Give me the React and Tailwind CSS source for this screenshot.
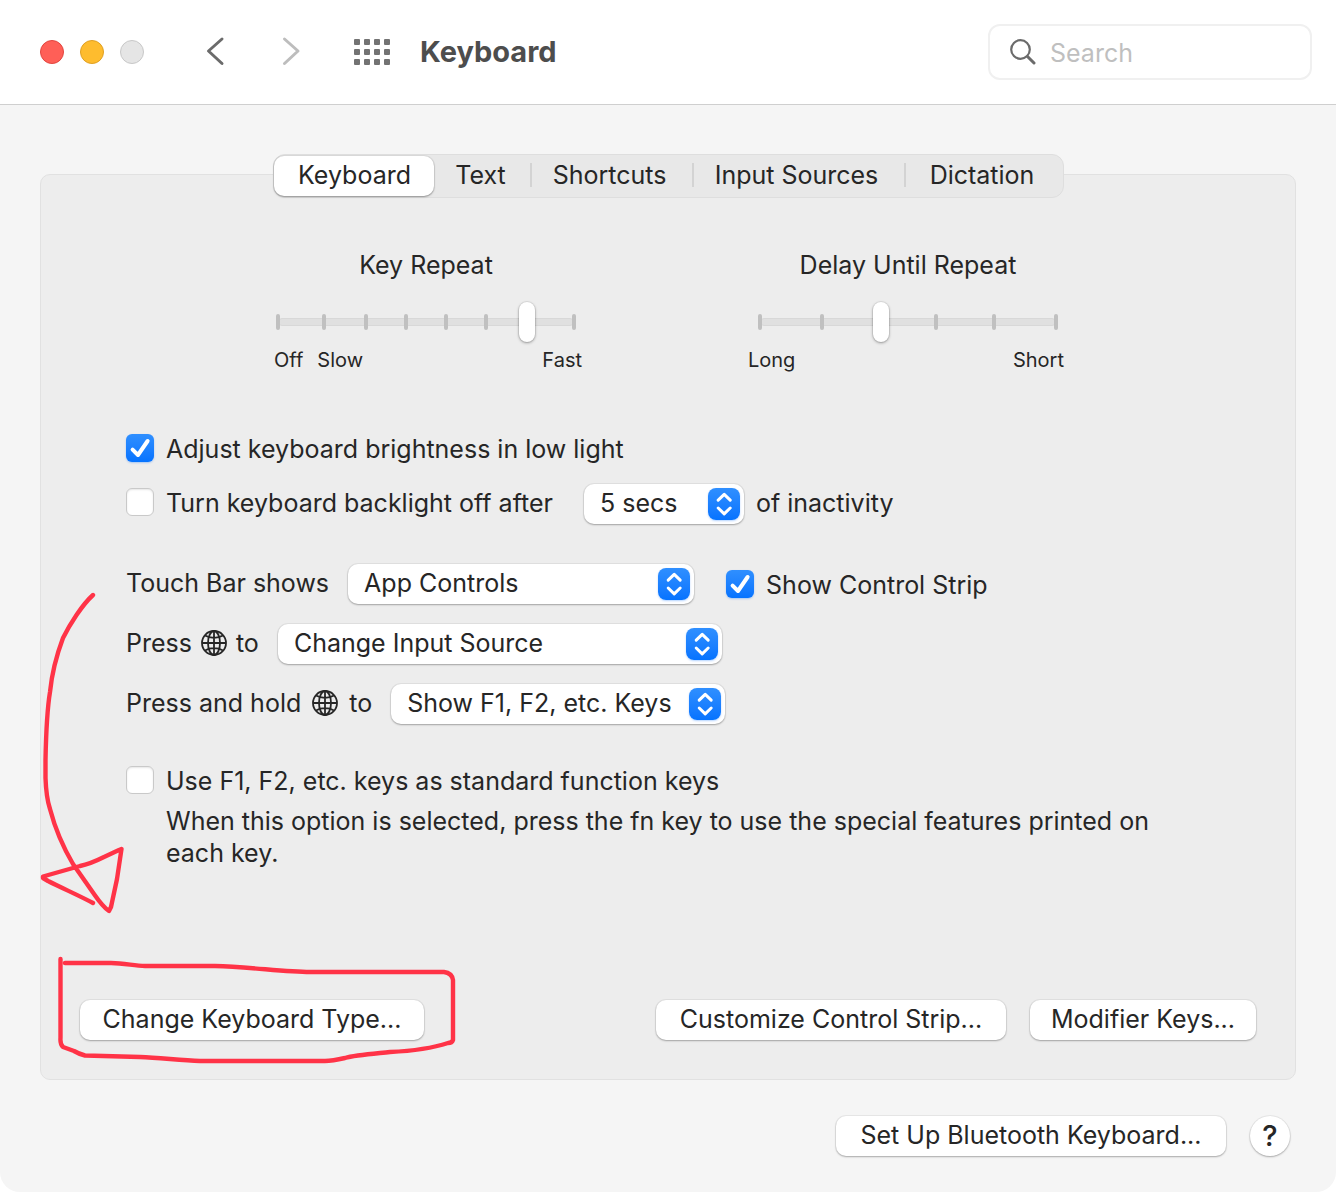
import React, { useState } from 'react';

const RAISED =
  'bg-white shadow-[0_0_0_1px_rgba(0,0,0,0.05),0_1px_2px_rgba(0,0,0,0.28)]';

function Check({ id, label, defaultChecked }) {
  return (
    <div className="flex items-center gap-3">
      <span className="grid size-7 shrink-0 place-items-center">
        <input
          id={id}
          type="checkbox"
          defaultChecked={defaultChecked}
          className="peer col-start-1 row-start-1 size-7 appearance-none rounded-md border border-[#c9c9c9] bg-white shadow-[inset_0_1px_2px_rgba(0,0,0,0.1)] checked:border-0 checked:bg-linear-to-b checked:from-[#2f8fff] checked:to-[#0573ff] checked:shadow-[0_1px_2px_rgba(0,110,255,0.3)]"
        />
        <svg
          viewBox="0 0 28 28"
          aria-hidden="true"
          className="pointer-events-none col-start-1 row-start-1 hidden size-7 peer-checked:block"
          fill="none"
          stroke="#fff"
          strokeWidth="4"
          strokeLinecap="round"
          strokeLinejoin="round"
        >
          <path d="M6.600 15.600 12 21 21.600 7" />
        </svg>
      </span>
      <label htmlFor={id} className="pt-0.5">{label}</label>
    </div>
  );
}

function Popup({ id, label, options, className }) {
  return (
    <span className={`relative inline-block ${className}`}>
      <select
        id={id}
        aria-label={label}
        className={`h-10 w-full appearance-none rounded-[10px] pl-4 pb-0.5 ${RAISED}`}
      >
        {options.map((o) => (
          <option key={o}>{o}</option>
        ))}
      </select>
      <svg
        viewBox="0 0 32 32"
        aria-hidden="true"
        className="pointer-events-none absolute top-1 right-1 size-8 rounded-lg bg-linear-to-b from-[#2f8fff] to-[#0573ff] shadow-[0_1px_2px_rgba(0,110,255,0.3)]"
        fill="none"
        stroke="#fff"
        strokeWidth="3"
        strokeLinecap="round"
        strokeLinejoin="round"
      >
        <path d="m10.200 12.200 6-5.800 6 5.800M10.200 20l6 5.800 6-5.800" />
      </svg>
    </span>
  );
}

function Globe() {
  return (
    <svg
      viewBox="0 0 26 26"
      role="img"
      aria-label="Globe"
      className="size-[26px]"
      fill="none"
      stroke="#262626"
      strokeWidth="1.800"
    >
      <circle cx="13" cy="13" r="12" />
      <ellipse cx="13" cy="13" rx="6" ry="12" />
      <path d="M13 1v24M1 13h24M4 5.600c5 3 13 3 18 0M4 20.400c5-3 13-3 18 0" />
    </svg>
  );
}

function Slider({ id, title, value, columns, ticks, children }) {
  const [v, setV] = useState(value);
  return (
    <div className="w-[312px]">
      <label htmlFor={id} className="block text-center">
        {title}
      </label>
      <div className="mt-[19px] grid h-11 items-center">
        <div className="col-start-1 row-start-1 mx-2 h-2 rounded-sm border border-[#d8d8d8] bg-[#e0e0e0]" />
        <div className={`col-start-1 row-start-1 ml-1.5 mr-1 grid ${columns}`}>
          {Array.from({ length: ticks }, (_, i) => (
            <span key={i} className="h-4 w-1 rounded-full bg-[#c0c0c0]" />
          ))}
        </div>
        <input
          id={id}
          type="range"
          min="0"
          max="100"
          value={v}
          onChange={(e) => setV(Number(e.target.value))}
          className="col-start-1 row-start-1 h-10 w-full appearance-none bg-transparent [&::-webkit-slider-thumb]:h-10 [&::-webkit-slider-thumb]:w-4 [&::-webkit-slider-thumb]:appearance-none [&::-webkit-slider-thumb]:rounded-full [&::-webkit-slider-thumb]:bg-white [&::-webkit-slider-thumb]:shadow-[0_0_0_1px_rgba(0,0,0,0.06),0_1px_3px_rgba(0,0,0,0.35)]"
        />
      </div>
      <div className="mt-1 flex text-[20px] leading-6">{children}</div>
    </div>
  );
}

function PushButton({ children, className }) {
  return (
    <button
      type="button"
      className={`h-10 rounded-[10px] pb-0.5 whitespace-nowrap ${RAISED} ${className}`}
    >
      {children}
    </button>
  );
}

const TABS = ['Keyboard', 'Text', 'Shortcuts', 'Input Sources', 'Dictation'];

export default function App() {
  const [tab, setTab] = useState('Keyboard');
  return (
    <div className="min-h-screen bg-white font-['Inter',sans-serif] text-[25px] leading-8 text-[#262626]">
      <div className="relative flex min-h-screen flex-col overflow-hidden rounded-b-[20px] bg-[#f5f5f5]">
        <header className="flex h-[105px] items-center border-b border-[#cfcfcf] bg-white pr-6 pl-10">
          <div className="flex gap-4">
            <button type="button" aria-label="Close" className="size-6 rounded-full border border-[#e2463f] bg-[#ff5f57]" />
            <button type="button" aria-label="Minimize" className="size-6 rounded-full border border-[#e0a023] bg-[#febc2e]" />
            <button type="button" aria-label="Zoom" disabled className="size-6 rounded-full border border-[#c8c8c8] bg-[#e5e5e5]" />
          </div>
          <button type="button" aria-label="Back" className="ml-[60px]">
            <svg viewBox="0 0 22 32" className="h-8 w-[22px]" fill="none" stroke="#6b6b6b" strokeWidth="3" strokeLinecap="round" strokeLinejoin="round">
              <path d="M18 3 4.500 15 18 27.500" />
            </svg>
          </button>
          <button type="button" aria-label="Forward" disabled className="ml-[54px]">
            <svg viewBox="0 0 22 32" className="h-8 w-[22px]" fill="none" stroke="#bdbdbd" strokeWidth="3" strokeLinecap="round" strokeLinejoin="round">
              <path d="M4.500 3 18 15 4.500 27.500" />
            </svg>
          </button>
          <button type="button" aria-label="Show all" className="ml-[52px] grid grid-cols-4 gap-1">
            {Array.from({ length: 12 }, (_, i) => (
              <span key={i} className="size-1.5 rounded-[1px] bg-[#737373]" />
            ))}
          </button>
          <h1 className="ml-[30px] text-[29px] font-bold text-[#4d4d4d]">Keyboard</h1>
          <label className="ml-auto flex h-14 w-[324px] items-center rounded-xl border-2 border-[#f0f0f0] pl-5">
            <svg viewBox="0 0 26 26" aria-hidden="true" className="size-[26px] shrink-0" fill="none" stroke="#6b6b6b" strokeWidth="2.200" strokeLinecap="round">
              <circle cx="10.500" cy="10.500" r="9.300" />
              <path d="m17.500 17.500 6.500 6.500" strokeWidth="3" />
            </svg>
            <input type="search" aria-label="Search" placeholder="Search" className="ml-3.5 w-full min-w-0 bg-transparent pt-0.5 outline-none placeholder:text-[#bfbfbf]" />
          </label>
        </header>

        <main className="flex flex-1 flex-col px-10 pt-[49px]">
          <div
            role="tablist"
            className="z-10 mx-auto -mb-6 grid h-11 w-full max-w-[791px] grid-cols-[160fr_96fr_162fr_212fr_159fr] rounded-xl border border-[#dedede] bg-[#e8e8e8]"
          >
            {TABS.map((t, i) => (
              <button
                key={t}
                type="button"
                role="tab"
                aria-selected={t === tab}
                onClick={() => setTab(t)}
                className={
                  t === tab
                    ? 'mt-px h-10 rounded-[10px] bg-white pb-0.5 pl-0.5 shadow-[0_0_0_1px_rgba(0,0,0,0.05),0_1px_2px_rgba(0,0,0,0.35)]'
                    : 'flex items-center pr-1 pb-0.5'
                }
              >
                {t !== tab && (
                  <span className={i > 1 ? 'h-6 w-0.5 bg-[#d3d3d3]' : 'h-6 w-0.5'} />
                )}
                <span className="flex-1 whitespace-nowrap">{t}</span>
              </button>
            ))}
          </div>

          <section className="flex flex-1 flex-col rounded-[10px] border border-[#e1e1e1] bg-[#ededed] pt-[74px] pb-[39px]">
            <div className="flex justify-center gap-[170px] pr-0.5">
              <Slider id="repeat" title="Key Repeat" value={84} ticks={8} columns="grid-cols-[46fr_42fr_40fr_40fr_40fr_41fr_47fr_6px]">
                <span className="ml-1">Off</span>
                <span className="ml-3.5">Slow</span>
                <span className="ml-auto">Fast</span>
              </Slider>
              <Slider id="delay" title="Delay Until Repeat" value={41} ticks={6} columns="grid-cols-[62fr_58fr_56fr_58fr_62fr_6px]">
                <span className="-ml-1">Long</span>
                <span className="ml-auto">Short</span>
              </Slider>
            </div>

            <div className="mt-[59px] flex flex-col pr-24 pl-[85px]">
              <Check id="brightness" defaultChecked label="Adjust keyboard brightness in low light" />
              <div className="mt-[19px] flex items-center">
                <div className="pb-1">
                  <Check id="backlight" label="Turn keyboard backlight off after" />
                </div>
                <Popup id="secs" label="Backlight delay" options={['5 secs', '10 secs', '30 secs', '1 min', '5 mins']} className="mr-3 ml-[31px] w-40" />
                <span className="pb-0.5">of inactivity</span>
              </div>
              <div className="mt-10 flex items-center">
                <label htmlFor="touchbar" className="pb-0.5">Touch Bar shows</label>
                <Popup id="touchbar" label="Touch Bar shows" options={['App Controls', 'Expanded Control Strip', 'F1, F2, etc. Keys', 'Quick Actions', 'Spaces']} className="mr-8 ml-[19px] w-[346px]" />
                <Check id="strip" defaultChecked label="Show Control Strip" />
              </div>
              <div className="mt-5 flex items-center">
                <label htmlFor="press" className="flex items-center gap-[9px] pb-0.5">
                  Press <Globe /> to
                </label>
                <Popup id="press" label="Press Globe to" options={['Change Input Source', 'Show Emoji & Symbols', 'Start Dictation', 'Do Nothing']} className="ml-[19px] w-[444px]" />
              </div>
              <div className="mt-5 flex items-center">
                <label htmlFor="hold" className="flex items-center gap-[11px] pb-0.5">
                  Press and hold <Globe /> to
                </label>
                <Popup id="hold" label="Press and hold Globe to" options={['Show F1, F2, etc. Keys', 'Show Control Strip']} className="ml-[19px] w-[334px]" />
              </div>
              <div className="mt-[39px]">
                <Check id="fn" label="Use F1, F2, etc. keys as standard function keys" />
              </div>
              <p className="mt-2 ml-10">
                When this option is selected, press the fn key to use the special features printed on each key.
              </p>
            </div>

            <div className="mt-auto flex px-[39px]">
              <PushButton className="w-[344px]">Change Keyboard Type...</PushButton>
              <PushButton className="ml-auto w-[350px]">Customize Control Strip...</PushButton>
              <PushButton className="ml-6 w-[226px]">Modifier Keys...</PushButton>
            </div>
          </section>
        </main>

        <footer className="flex justify-end gap-6 px-[46px] py-9">
          <PushButton className="w-[390px]">Set Up Bluetooth Keyboard...</PushButton>
          <button type="button" aria-label="Help" className={`size-10 rounded-full text-[29px] font-medium ${RAISED}`}>
            ?
          </button>
        </footer>

        {/* Hand-drawn markup pointing at the keyboard type button */}
        <svg
          viewBox="0 0 460 500"
          aria-hidden="true"
          className="pointer-events-none absolute top-[580px] left-0 z-20 h-[500px] w-[460px]"
          fill="none"
          stroke="#ff3347"
          strokeWidth="4.400"
          strokeLinecap="round"
          strokeLinejoin="round"
        >
          <path d="M93 15C82 25 70 44 63 58C57 74 52 92 50 112C47 130 46 155 45.500 180V198C46 212 47 220 50 229C56 252 63 267 73 284L94 314Q103 327 109 331L111 327L117 299L121.500 269L119 270L104 277Q90 284 80 286L43 296.500V298L48 301C64 309 82 317 93 323" />
          <path d="M65 383H111C125 383 134 386 145 386H215C250 387 285 392 310 392H444Q452 393 453 400V460Q452 463 448 463C430 469 412 471 390 472C370 474 355 475 345 478Q332 481 325 481H200C180 480 160 478 140 477L85 475.500Q79 474 74 471L63 467Q60 464 60.500 458V379" />
        </svg>
      </div>
    </div>
  );
}
